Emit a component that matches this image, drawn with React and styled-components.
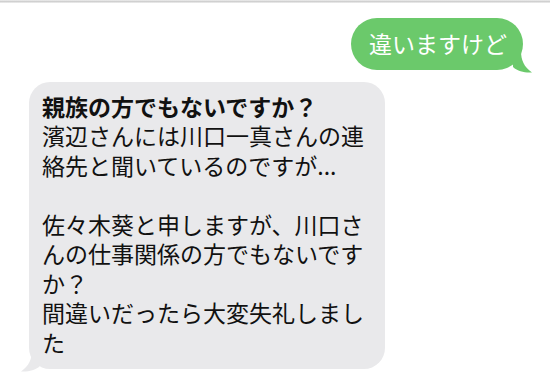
import React from "react";
import styled, { createGlobalStyle } from "styled-components";

const Global = createGlobalStyle`
  html, body { margin: 0; padding: 0; background: #ffffff; }
  body { width: 550px; height: 375px; overflow: hidden; font-family: "Noto Sans CJK JP", "Noto Sans", sans-serif; }
`;

const Screen = styled.div`
  width: 550px;
  height: 375px;
  display: flex;
  flex-direction: column;
  background: #fff;
  overflow: hidden;
`;

const TopEdge = styled.div`
  height: 3px;
  background: linear-gradient(#f4f4f4, #cdcdcd 45%, #f0f0f0);
`;

const Thread = styled.div`
  display: flex;
  flex-direction: column;
  padding: 15px 27px 0 29px;
  gap: 12px;
`;

const Row = styled.div`
  display: flex;
  justify-content: ${(p) => (p.$me ? "flex-end" : "flex-start")};
`;

const Bubble = styled.div`
  position: relative;
  box-sizing: border-box;
  background: ${(p) => (p.$me ? "#6bc96b" : "#e9e9eb")};
  color: ${(p) => (p.$me ? "#ffffff" : "#111111")};
  font-size: 23px;
  line-height: 29.5px;
  border-radius: ${(p) => (p.$me ? "26px" : "21px")};
  padding: ${(p) => (p.$me ? "11px 16px 11px 18px" : "10px 13px 12px 13px")};
  width: ${(p) => (p.$me ? "auto" : "356px")};
`;

const Line = styled.div`
  height: 29.5px;
  white-space: nowrap;
  font-weight: ${(p) => (p.$bold ? 700 : 400)};
`;

const Tail = styled.svg`
  position: absolute;
  bottom: -3px;
  width: 20px;
  height: 22px;
  ${(p) => (p.$me ? "right: -10px;" : "left: -9px; transform: scaleX(-1);")}
`;

function BubbleTail({ me, color }) {
  return (
    <Tail $me={me} viewBox="0 0 20 22">
      <path d="M0 0 L8 0 C8 9 11 16 19 21.5 C12 22 5 20.5 0 16 Z" fill={color} />
    </Tail>
  );
}

const lines = [
  "濱辺さんには川口一真さんの連",
  "絡先と聞いているのですが...",
  "",
  "佐々木葵と申しますが、川口さ",
  "んの仕事関係の方でもないです",
  "か？",
  "間違いだったら大変失礼しまし",
  "た",
];

export default function App() {
  return (
    <Screen>
      <Global />
      <TopEdge />
      <Thread>
        <Row $me>
          <Bubble $me>
            <Line>違いますけど</Line>
            <BubbleTail me color="#6bc96b" />
          </Bubble>
        </Row>
        <Row>
          <Bubble>
            <Line $bold>親族の方でもないですか？</Line>
            {lines.map((t, i) => (
              <Line key={i}>{t}</Line>
            ))}
            <BubbleTail color="#e9e9eb" />
          </Bubble>
        </Row>
      </Thread>
    </Screen>
  );
}
